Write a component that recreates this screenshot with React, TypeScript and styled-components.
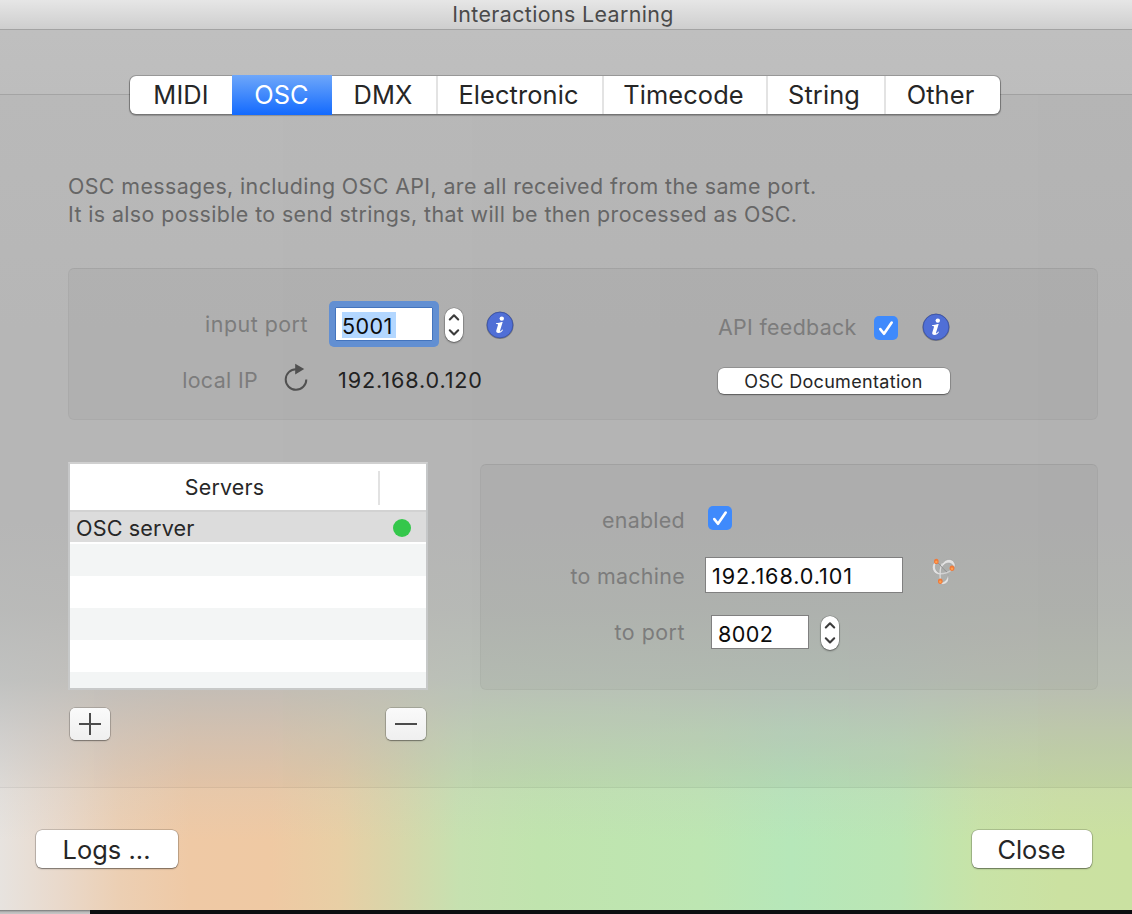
import React from "react";
import styled, { createGlobalStyle, css } from "styled-components";

const GlobalStyle = createGlobalStyle`
  * { box-sizing: border-box; }
  body {
    margin: 0;
    overflow: hidden;
    background: #0d0e10;
    font-family: Inter, "Liberation Sans", sans-serif;
    color: #272727;
  }
`;

const Screen = styled.div`
  width: 1132px;
  height: 914px;
  display: flex;
  flex-direction: column;
`;

const Window = styled.div`
  height: 910px;
  display: flex;
  flex-direction: column;
  background:
    linear-gradient(180deg, #c0c0c0 0, #bdbdbd 95px, #bababa 330px, #bababa 520px, rgba(187, 188, 187, 0.95) 610px, rgba(190, 192, 191, 0.84) 680px, rgba(193, 194, 194, 0.5) 735px, rgba(195, 196, 195, 0.18) 787px, rgba(195, 196, 195, 0) 840px),
    linear-gradient(90deg, #e7e3df 0, #e9d9cb 60px, #eccfb3 120px, #efc9a5 190px, #efc9a3 270px, #e8cfa5 340px, #dad5a9 390px, #c6e1b0 460px, #c0e4ae 540px, #bde6b2 700px, #b6e7b9 790px, #bbe6b4 900px, #c8e3a7 980px, #cbe1a1 1060px, #cae1a1 1132px);
`;

const TitleBar = styled.header`
  height: 30px;
  flex: none;
  border-bottom: 1px solid #a3a3a3;
  background: linear-gradient(#e6e6e6, #cecece);
  text-align: center;
  font-size: 21.4px;
  line-height: 29px;
  letter-spacing: 0.38px;
  padding-right: 6px;
  color: #4a4a4a;
`;

const Tabs = styled.nav`
  position: relative;
  z-index: 1;
  display: flex;
  width: 870px;
  height: 38px;
  margin: 46px 0 -20px 130px;
  border-radius: 6px;
  background: #fff;
  box-shadow: 0 0 0 1px rgba(0, 0, 0, 0.18), 0 1px 1px 1px rgba(0, 0, 0, 0.22);
`;

const Tab = styled.button<{ $w: number; $active?: boolean; $divided?: boolean; $shift?: number }>`
  width: ${(p) => p.$w}px;
  border: 0;
  padding: 0 ${(p) => p.$shift ?? 0}px 0 0;
  background: none;
  font: 400 25.4px/38px Inter, sans-serif;
  letter-spacing: 0.1px;
  color: #262626;
  ${(p) => p.$divided && css`border-left: 2px solid #e3e3e3;`}
  ${(p) =>
    p.$active &&
    css`
      height: 40px;
      margin-top: -1px;
      line-height: 40px;
      color: #fff;
      background: linear-gradient(#6ea7fa, #136afe);
    `}
`;

const TabPanel = styled.main`
  height: 694px;
  flex: none;
  padding: 77px 34px 0 68px;
  border-top: 1px solid rgba(0, 0, 0, 0.11);
  border-bottom: 1px solid rgba(0, 0, 0, 0.05);
  background: linear-gradient(90deg, rgba(0, 0, 0, 0.02), rgba(0, 0, 0, 0.045));
`;

const Intro = styled.p`
  margin: 0;
  height: 56px;
  font-size: 21.4px;
  line-height: 28px;
  color: #666;
  white-space: nowrap;
`;

const Line = styled.span`
  display: block;
  letter-spacing: 0.39px;
`;

const Group = styled.section<{ $h: number }>`
  display: flex;
  height: ${(p) => p.$h}px;
  border: 1px solid rgba(0, 0, 0, 0.035);
  border-top-color: rgba(0, 0, 0, 0.07);
  border-radius: 6px;
  background: rgba(0, 0, 0, 0.032);
`;

const InputGroup = styled(Group)`
  margin-top: 40px;
`;

const Column = styled.div<{ $w: number }>`
  width: ${(p) => p.$w}px;
  flex: none;
`;

const Row = styled.div<{ $h: number; $top?: number }>`
  display: flex;
  align-items: center;
  height: ${(p) => p.$h}px;
  margin-top: ${(p) => p.$top ?? 0}px;
`;

const Label = styled.label<{ $w: number; $track?: number; $drop?: number; $lift?: number }>`
  width: ${(p) => p.$w}px;
  padding-top: ${(p) => p.$drop ?? 0}px;
  padding-bottom: ${(p) => p.$lift ?? 0}px;
  flex: none;
  font-size: 21.4px;
  line-height: 28px;
  letter-spacing: ${(p) => p.$track ?? 0.35}px;
  text-align: right;
  white-space: nowrap;
  color: #7c7c7c;
`;

const Field = styled.div<{ $w: number; $h: number; $left: number; $focused?: boolean; $track?: number; $drop?: number }>`
  display: flex;
  align-items: center;
  width: ${(p) => p.$w}px;
  height: ${(p) => p.$h}px;
  margin-left: ${(p) => p.$left}px;
  padding: ${(p) => p.$drop ?? 3}px 0 0 6px;
  flex: none;
  border: 1px solid ${(p) => (p.$focused ? "#4474bd" : "#808080")};
  background: #fff;
  color: #0c0c0c;
  font-size: 21.6px;
  line-height: 26px;
  letter-spacing: ${(p) => p.$track ?? 0.4}px;
  ${(p) => p.$focused && css`
    border-radius: 1px;
    box-shadow: 0 0 0 6px #628fd2;
    clip-path: inset(-6px round 5px);
  `}
`;

const Selection = styled.span`
  width: 54px;
  height: 26px;
  margin-top: -2px;
  padding-top: 1px;
  background: #b3d7ff;
  white-space: nowrap;
`;

const Value = styled.span`
  margin-left: 28px;
  padding-top: 3px;
  font-size: 21.6px;
  line-height: 28px;
  letter-spacing: 0.88px;
  color: #222;
`;

const StepperBody = styled.button<{ $left: number }>`
  width: 18px;
  height: 34px;
  margin: 1px 0 0 ${(p) => p.$left}px;
  padding: 0;
  border: 0;
  border-radius: 9px;
  background: #fff;
  box-shadow: 0 0 0 0.5px rgba(0, 0, 0, 0.25), 0 1px 2px rgba(0, 0, 0, 0.4);
  svg { display: block; }
`;

const CheckBody = styled.span<{ $left: number }>`
  width: 24px;
  height: 24px;
  flex: none;
  margin-left: ${(p) => p.$left}px;
  border-radius: 5px;
  background: #3f8afc;
  svg { display: block; }
`;

const IconSlot = styled.span<{ $left: number; $lift?: number; $drop?: number }>`
  display: block;
  flex: none;
  margin-left: ${(p) => p.$left}px;
  padding-top: ${(p) => p.$drop ?? 0}px;
  padding-bottom: ${(p) => p.$lift ?? 0}px;
  svg { display: block; }
`;

const PushButton = styled.button<{ $w: number; $h: number; $size: number; $track?: number }>`
  width: ${(p) => p.$w}px;
  height: ${(p) => p.$h}px;
  padding: 1px 1px 0 0;
  border: 0;
  border-radius: 6px;
  background: #fff;
  box-shadow: 0 0 0 0.5px rgba(0, 0, 0, 0.3), 0 1px 1.5px rgba(0, 0, 0, 0.4);
  font: 400 ${(p) => p.$size}px/1 Inter, sans-serif;
  letter-spacing: ${(p) => p.$track ?? 0}px;
  color: #262626;
  white-space: nowrap;
`;

const DocButton = styled(PushButton)`
  display: block;
  margin: 26px 0 0 0;
`;

const Lower = styled.div`
  display: flex;
  justify-content: space-between;
  margin-top: 42px;
`;

const ServerArea = styled.div`
  width: 360px;
`;

const Table = styled.div`
  height: 228px;
  border: 2px solid rgba(202, 204, 205, 0.8);
  border-top-color: #d0d0d0;
  background: #fff;
  background-clip: padding-box;
`;

const TableHead = styled.div`
  display: flex;
  align-items: center;
  height: 48px;
  border-bottom: 2px solid #d2d2d2;
  font-size: 21.4px;
  letter-spacing: 0.2px;
`;

const HeadName = styled.div`
  width: 310px;
  height: 34px;
  line-height: 33px;
  margin-top: 2px;
  padding-left: 1px;
  border-right: 2px solid #e2e2e2;
  text-align: center;
`;

const ServerRow = styled.div`
  display: flex;
  align-items: center;
  justify-content: space-between;
  height: 30px;
  margin-bottom: 2px;
  padding: 2px 15px 0 6px;
  background: #dcdcdc;
  font-size: 21.6px;
  line-height: 28px;
  letter-spacing: 0.15px;
`;

const Dot = styled.i`
  width: 18px;
  height: 18px;
  border-radius: 50%;
  background: #34c74b;
`;

const Stripe = styled.div<{ $h?: number; $tint?: boolean }>`
  height: ${(p) => p.$h ?? 32}px;
  background: ${(p) => (p.$tint ? "#f3f5f5" : "#fff")};
`;

const TableTools = styled.div`
  display: flex;
  justify-content: space-between;
  padding: 18px 2px 0;
`;

const ToolButton = styled.button`
  width: 40px;
  height: 32px;
  padding: 0;
  border: 0;
  border-radius: 5px;
  background: linear-gradient(#fafafa, #efefef);
  box-shadow: 0 0 0 0.5px rgba(0, 0, 0, 0.3), 0 1px 1.5px rgba(0, 0, 0, 0.35);
  svg { display: block; }
`;

const ServerGroup = styled(Group)`
  width: 618px;
  margin-top: 2px;
`;

const Footer = styled.footer`
  display: flex;
  justify-content: space-between;
  padding: 42px 40px 0 36px;
`;

const Desktop = styled.div`
  height: 4px;
  background: linear-gradient(#777, #b9b9b9 2px, #c8c8c8);
  background-size: 90px 4px;
  background-repeat: no-repeat;
`;

const Stepper = ({ left }: { left: number }) => (
  <StepperBody $left={left} aria-label="Adjust">
    <svg width="18" height="34" viewBox="0 0 18 34" fill="none" stroke="#3c3c3c" strokeWidth="2.1" strokeLinecap="round" strokeLinejoin="round">
      <path d="M4.800 11.500 9 7.300l4.200 4.200M4.800 22.300 9 26.500l4.200-4.200" />
    </svg>
  </StepperBody>
);

const Checkbox = ({ left }: { left: number }) => (
  <CheckBody $left={left}>
    <svg width="24" height="24" viewBox="0 0 24 24" fill="none" stroke="#fff" strokeWidth="2.6" strokeLinecap="round" strokeLinejoin="round">
      <path d="M6.300 13.100 10 17.800 17.700 6.600" />
    </svg>
  </CheckBody>
);

const Info = () => (
  <svg width="28" height="28" viewBox="0 0 28 28">
    <circle cx="14" cy="14.4" r="13.6" fill="#555" opacity=".55" />
    <circle cx="14" cy="14" r="12.9" fill="#506fd6" stroke="#3f56a8" strokeWidth="1" />
    <circle cx="15.8" cy="7.6" r="2.2" fill="#fff" />
    <path d="M10 12.200c2.200-.3 4-.7 5.800-1.300h.9l-2.600 8.600c-.2.8.1 1 .6.7.5-.3 1-.9 1.500-1.600l.8.5c-1.200 1.900-2.600 3-4.500 3-1.900 0-2.600-1-2.200-2.500l1.600-5.300c.2-.9 0-1.200-1.900-1.300z" fill="#fff" />
  </svg>
);

const Refresh = () => (
  <svg width="28" height="30" viewBox="0 0 28 30">
    <path d="M14.200 6.200a10.300 10.300 0 1 0 10.100 10.300" fill="none" stroke="#505050" strokeWidth="2" />
    <path d="M13.200.8v10.600l9-5.300z" fill="#505050" />
  </svg>
);

const Trefoil = () => (
  <svg width="28" height="30" viewBox="0 0 28 30" fill="none">
    <path d="M5.600 4.500C.8 7.500 1.600 14 6 16.800c3 1.600 6 .6 9 .2-3.500-.6-7.500-.8-9-4-1.200-2.800-.8-5.500 1-7.500z" fill="#e2e2e2" stroke="#9a9a9a" strokeWidth=".5" />
    <path d="M10 16.700c5 .2 9-1.500 12.300-4.500" stroke="#d2d2d2" strokeWidth="1.300" />
    <path d="M12.500 6.500c3-5 10-6 12.300.2.600 1.600.2 3-.8 4.300-.4-3.400-4-6.500-8.500-4.200-2 1.200-4 3.700-4.600 6.700" fill="#e2e2e2" stroke="#9a9a9a" strokeWidth=".5" />
    <path d="M12.500 6.500C10 10 9.800 17 10.300 23" stroke="#dcdcdc" strokeWidth="1.300" />
    <path d="M7.500 5.500c3 2 5 6.500 9.500 9.500" stroke="#8f8f8f" strokeWidth=".9" />
    <path d="M10.500 25.500c4.500-.4 6.800-3 7.300-8 2.400 5.500-.2 10.500-6.800 10z" fill="#e2e2e2" stroke="#9a9a9a" strokeWidth=".5" />
    <ellipse cx="6.300" cy="4.400" rx="2.300" ry="2.700" fill="#f07a3a" />
    <ellipse cx="22" cy="11.200" rx="2.400" ry="2.700" fill="#f07a3a" />
    <ellipse cx="10.300" cy="24.200" rx="2.300" ry="2.700" fill="#f07a3a" />
    <circle cx="6.300" cy="4.900" r="1.200" fill="#ffa04e" />
    <circle cx="22" cy="11.700" r="1.200" fill="#ffa04e" />
    <circle cx="10.300" cy="24.700" r="1.200" fill="#ffa04e" />
  </svg>
);

export default function App() {
  return (
    <Screen>
      <GlobalStyle />
      <Window>
        <TitleBar>Interactions Learning</TitleBar>
        <Tabs>
          <Tab $w={102}>MIDI</Tab>
          <Tab $w={100} $shift={1} $active>OSC</Tab>
          <Tab $w={104} $shift={2}>DMX</Tab>
          <Tab $w={166} $shift={3} $divided>Electronic</Tab>
          <Tab $w={164} $shift={3} $divided>Timecode</Tab>
          <Tab $w={118} $shift={4} $divided>String</Tab>
          <Tab $w={116} $shift={5} $divided>Other</Tab>
        </Tabs>
        <TabPanel>
          <Intro>
            <Line>OSC messages, including OSC API, are all received from the same port.</Line>
            <Line>It is also possible to send strings, that will be then processed as OSC.</Line>
          </Intro>
          <InputGroup $h={152}>
            <Column $w={649}>
              <Row $h={34} $top={38}>
                <Label $w={239} $track={0.5}>input port</Label>
                <Field $w={98} $h={34} $left={27} $focused>
                  <Selection>5001</Selection>
                </Field>
                <Stepper left={12} />
                <IconSlot $left={23} $drop={1}><Info /></IconSlot>
              </Row>
              <Row $h={30} $top={22}>
                <Label $w={189} $drop={4}>local IP</Label>
                <IconSlot $left={24}><Refresh /></IconSlot>
                <Value>192.168.0.120</Value>
              </Row>
            </Column>
            <Column $w={240}>
              <Row $h={28} $top={45}>
                <Label $w={138} $track={0.32} $lift={3}>API feedback</Label>
                <Checkbox left={18} />
                <IconSlot $left={24} $lift={2}><Info /></IconSlot>
              </Row>
              <DocButton $w={232} $h={26} $size={18} $track={0.32}>OSC Documentation</DocButton>
            </Column>
          </InputGroup>
          <Lower>
            <ServerArea>
              <Table>
                <TableHead>
                  <HeadName>Servers</HeadName>
                </TableHead>
                <ServerRow>
                  OSC server
                  <Dot />
                </ServerRow>
                <Stripe $tint />
                <Stripe />
                <Stripe $tint />
                <Stripe />
                <Stripe $tint $h={16} />
              </Table>
              <TableTools>
                <ToolButton aria-label="Add">
                  <svg width="40" height="32" viewBox="0 0 40 32" stroke="#4b4b4b" strokeWidth="2">
                    <path d="M9 16h22M20 5v22" />
                  </svg>
                </ToolButton>
                <ToolButton aria-label="Remove">
                  <svg width="40" height="32" viewBox="0 0 40 32" stroke="#4b4b4b" strokeWidth="2">
                    <path d="M9 16h22" />
                  </svg>
                </ToolButton>
              </TableTools>
            </ServerArea>
            <ServerGroup $h={226}>
              <Column $w={560}>
                <Row $h={28} $top={39}>
                  <Label $w={204} $drop={4} $track={0.3}>enabled</Label>
                  <Checkbox left={23} />
                </Row>
                <Row $h={36} $top={25}>
                  <Label $w={204} $drop={2} $track={0.3}>to machine</Label>
                  <Field $w={198} $h={36} $left={20} $track={0.92} $drop={1}>192.168.0.101</Field>
                  <IconSlot $left={27} $lift={6}><Trefoil /></IconSlot>
                </Row>
                <Row $h={34} $top={22}>
                  <Label $w={204} $track={0.5}>to port</Label>
                  <Field $w={98} $h={34} $left={26}>8002</Field>
                  <Stepper left={12} />
                </Row>
              </Column>
            </ServerGroup>
          </Lower>
        </TabPanel>
        <Footer>
          <PushButton $w={142} $h={38} $size={25.4} $track={0.05}>Logs ...</PushButton>
          <PushButton $w={120} $h={38} $size={25.4}>Close</PushButton>
        </Footer>
      </Window>
      <Desktop />
    </Screen>
  );
}
